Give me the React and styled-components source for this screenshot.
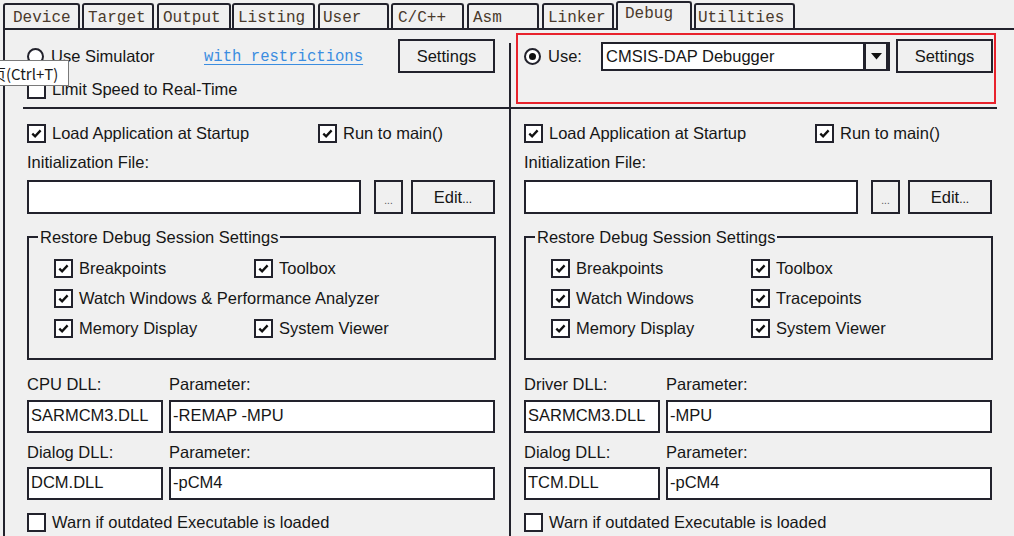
import React from "react";
import styled, { createGlobalStyle } from "styled-components";

const DARK = "#22222c";

const GlobalStyle = createGlobalStyle`
  html, body {
    margin: 0;
    padding: 0;
    background: #f0f0f0;
  }
  body {
    font-family: "Liberation Sans", Arial, sans-serif;
    font-size: 16.5px;
    color: #161616;
  }
`;

const Page = styled.div`
  position: relative;
  width: 1014px;
  height: 536px;
  overflow: hidden;
  background: #f0f0f0;
`;

const TabBar = styled.div`
  display: flex;
  align-items: flex-end;
  height: 28px;
`;

const Tab = styled.div`
  box-sizing: border-box;
  position: relative;
  z-index: ${(p) => (p.$active ? 2 : 0)};
  width: ${(p) => p.$w}px;
  margin-left: ${(p) => p.$ml}px;
  height: ${(p) => (p.$active ? 29 : 25)}px;
  margin-bottom: ${(p) => (p.$active ? -2 : 0)}px;
  padding: ${(p) => (p.$active ? 2 : 4)}px 0 0 ${(p) => p.$pad}px;
  border: 2px solid ${DARK};
  border-bottom: none;
  border-radius: 3px 3px 0 0;
  background: #f0f0f0;
  font-family: "Liberation Mono", "DejaVu Sans Mono", monospace;
  font-size: 16px;
  line-height: 18px;
  color: #4a3a2c;
  white-space: nowrap;
`;

const Panel = styled.div`
  margin-left: 3px;
  height: 506px;
  border-top: 2px solid ${DARK};
  border-left: 2px solid ${DARK};
  display: grid;
  grid-template-columns: 504px 2px 1fr;
`;

const VSep = styled.div`
  margin-top: 13px;
  background: ${DARK};
`;

const Column = styled.div`
  display: flex;
  flex-direction: column;
  padding-left: ${(p) => p.$pl}px;
  min-width: 0;
`;

const Top = styled.div`
  height: 77px;
`;

const HLine = styled.div`
  width: 486px;
  height: 2px;
  margin-left: ${(p) => p.$ml}px;
  background: ${DARK};
`;

const SimRow = styled.div`
  display: grid;
  grid-template-columns: 177px 1fr 97px;
  align-items: center;
  width: 468px;
  height: 34px;
  margin-top: 9px;
`;

const RedBox = styled.div`
  box-sizing: border-box;
  display: grid;
  grid-template-columns: 71px 289px 97px;
  column-gap: 6px;
  grid-template-rows: 34px;
  align-items: center;
  width: 480px;
  height: 71px;
  margin: 3px 0 0 -8px;
  padding: 4px 0 0 6px;
  border: 2px solid #e8222c;
`;

const Option = styled.label`
  display: flex;
  align-items: center;
  gap: 7px;
  line-height: 18px;
  white-space: nowrap;
`;

const RadioCircle = styled.span`
  box-sizing: border-box;
  display: flex;
  align-items: center;
  justify-content: center;
  width: 17px;
  height: 17px;
  border: 2px solid ${DARK};
  border-radius: 50%;
  background: #fff;
  flex: none;
`;

const RadioDot = styled.span`
  width: 7px;
  height: 7px;
  border-radius: 50%;
  background: #111;
`;

const Radio = ({ checked }) => (
  <RadioCircle>{checked && <RadioDot />}</RadioCircle>
);

const Link = styled.span`
  font-family: "Liberation Mono", "DejaVu Sans Mono", monospace;
  font-size: 15.6px;
  color: #3b8de0;
  text-decoration: underline;
  text-underline-offset: 3px;
  white-space: nowrap;
  margin-top: 1px;
`;

const Button = styled.div`
  box-sizing: border-box;
  display: flex;
  align-items: center;
  justify-content: center;
  width: ${(p) => p.$w}px;
  height: 34px;
  margin-left: ${(p) => p.$ml || 0}px;
  border: 2px solid ${DARK};
  background: #f0f0f0;
  white-space: nowrap;
`;

const SmallDots = styled.span`
  font-size: 10px;
  color: #555;
  margin-top: 6px;
`;

const EditDots = styled.span`
  font-size: 12px;
  margin-top: 4px;
`;

const Combo = styled.div`
  box-sizing: border-box;
  display: flex;
  height: 29px;
  border: 2px solid ${DARK};
  border-right-width: 4px;
  background: #fff;
`;

const ComboText = styled.div`
  flex: 1;
  padding-left: 3px;
  line-height: 25px;
  font-size: 16.5px;
`;

const ComboArrow = styled.div`
  display: flex;
  align-items: center;
  justify-content: center;
  width: 20px;
  border-left: 3px solid ${DARK};
  background: #f2f2f2;
`;

const CheckBoxEl = styled.span`
  box-sizing: border-box;
  display: flex;
  align-items: center;
  justify-content: center;
  width: 19px;
  height: 19px;
  border: 2px solid ${DARK};
  background: #fff;
  flex: none;
`;

const Check = ({ checked }) => (
  <CheckBoxEl>
    {checked && (
      <svg width="11" height="9" viewBox="0 0 11 9">
        <path d="M1.3 4.6 L4.1 7.3 L9.6 1.4" fill="none" stroke="#111" strokeWidth="2.3" />
      </svg>
    )}
  </CheckBoxEl>
);

const CheckItem = styled.div`
  display: flex;
  align-items: center;
  gap: 6px;
  height: 19px;
  width: ${(p) => (p.$w ? `${p.$w}px` : "auto")};
  margin-top: ${(p) => p.$mt || 0}px;
  white-space: nowrap;
  grid-column: ${(p) => (p.$span ? "span 2" : "auto")};
`;

const CheckRow = styled.div`
  display: flex;
  margin-top: ${(p) => p.$mt}px;
`;

const FieldLabel = styled.div`
  line-height: 18px;
  margin-top: ${(p) => p.$mt || 0}px;
  white-space: nowrap;
`;

const FileRow = styled.div`
  display: flex;
  margin-top: 9px;
`;

const TextBox = styled.div`
  box-sizing: border-box;
  width: ${(p) => (p.$w ? `${p.$w}px` : "auto")};
  height: ${(p) => p.$h || 33}px;
  padding: 0 0 3px 2px;
  border: 2px solid ${DARK};
  background: #fff;
  line-height: ${(p) => (p.$h || 33) - 7}px;
  white-space: nowrap;
`;

const Group = styled.fieldset`
  box-sizing: border-box;
  width: 469px;
  margin: 14px 0 0 0;
  padding: 13px 0 20px 0;
  border: 2px solid ${DARK};
  min-width: 0;
`;

const Legend = styled.legend`
  margin-left: 9px;
  padding: 0 2px;
  line-height: 18px;
  font-size: 16.5px;
`;

const GroupGrid = styled.div`
  display: grid;
  grid-template-columns: 200px auto;
  row-gap: 11px;
  margin-left: 25px;
`;

const DllRow = styled.div`
  display: grid;
  grid-template-columns: 136px 326px;
  column-gap: 6px;
  margin-top: ${(p) => p.$mt}px;
`;

const Tooltip = styled.div`
  position: absolute;
  left: -11px;
  top: 60px;
  z-index: 5;
  height: 24px;
  padding: 0 10px 0 1px;
  border: 1px solid #7a7a7a;
  background: #fff;
  font-family: "Noto Sans CJK SC", "Noto Sans", sans-serif;
  font-size: 15px;
  line-height: 25px;
  color: #1a1a1a;
  white-space: nowrap;
`;

const tabs = [
  { label: "Device", left: 3, right: 80, pad: 8 },
  { label: "Target", left: 82, right: 154, pad: 4 },
  { label: "Output", left: 157, right: 231, pad: 4 },
  { label: "Listing", left: 232, right: 315, pad: 4 },
  { label: "User", left: 318, right: 389, pad: 3 },
  { label: "C/C++", left: 391, right: 464, pad: 5 },
  { label: "Asm", left: 467, right: 539, pad: 4 },
  { label: "Linker", left: 542, right: 614, pad: 4 },
  { label: "Debug", left: 616, right: 692, pad: 7, active: true },
  { label: "Utilities", left: 694, right: 795, pad: 2 },
];

const DebugSettings = ({ restore, dllLabel, dll, dllParam, dialog, dialogParam }) => (
  <>
    <CheckRow $mt={15}>
      <CheckItem $w={291}>
        <Check checked />
        Load Application at Startup
      </CheckItem>
      <CheckItem>
        <Check checked />
        Run to main()
      </CheckItem>
    </CheckRow>
    <FieldLabel $mt={10}>Initialization File:</FieldLabel>
    <FileRow>
      <TextBox $w={334} $h={34} />
      <Button $w={29} $ml={13}>
        <SmallDots>...</SmallDots>
      </Button>
      <Button $w={84} $ml={8}>
        Edit<EditDots>...</EditDots>
      </Button>
    </FileRow>
    <Group>
      <Legend>Restore Debug Session Settings</Legend>
      <GroupGrid>
        {restore.map((item) => (
          <CheckItem key={item.label} $span={item.span}>
            <Check checked />
            {item.label}
          </CheckItem>
        ))}
      </GroupGrid>
    </Group>
    <DllRow $mt={15}>
      <FieldLabel>{dllLabel}</FieldLabel>
      <FieldLabel>Parameter:</FieldLabel>
    </DllRow>
    <DllRow $mt={7}>
      <TextBox>{dll}</TextBox>
      <TextBox>{dllParam}</TextBox>
    </DllRow>
    <DllRow $mt={10}>
      <FieldLabel>Dialog DLL:</FieldLabel>
      <FieldLabel>Parameter:</FieldLabel>
    </DllRow>
    <DllRow $mt={6}>
      <TextBox>{dialog}</TextBox>
      <TextBox>{dialogParam}</TextBox>
    </DllRow>
    <CheckItem $mt={13}>
      <Check />
      Warn if outdated Executable is loaded
    </CheckItem>
  </>
);

const leftRestore = [
  { label: "Breakpoints" },
  { label: "Toolbox" },
  { label: "Watch Windows & Performance Analyzer", span: true },
  { label: "Memory Display" },
  { label: "System Viewer" },
];

const rightRestore = [
  { label: "Breakpoints" },
  { label: "Toolbox" },
  { label: "Watch Windows" },
  { label: "Tracepoints" },
  { label: "Memory Display" },
  { label: "System Viewer" },
];

export default function App() {
  return (
    <Page>
      <GlobalStyle />
      <TabBar>
        {tabs.map((t, i) => (
          <Tab
            key={t.label}
            $w={t.right - t.left}
            $ml={t.left - (i ? tabs[i - 1].right : 0)}
            $pad={t.pad}
            $active={t.active}
          >
            {t.label}
          </Tab>
        ))}
      </TabBar>
      <Panel>
        <Column $pl={22}>
          <Top>
            <SimRow>
              <Option>
                <Radio />
                Use Simulator
              </Option>
              <Link>with restrictions</Link>
              <Button $w={97}>Settings</Button>
            </SimRow>
            <CheckItem $mt={7}>
              <Check />
              Limit Speed to Real-Time
            </CheckItem>
          </Top>
          <HLine $ml={-4} />
          <DebugSettings
            restore={leftRestore}
            dllLabel="CPU DLL:"
            dll="SARMCM3.DLL"
            dllParam="-REMAP -MPU"
            dialog="DCM.DLL"
            dialogParam="-pCM4"
          />
        </Column>
        <VSep />
        <Column $pl={13}>
          <Top>
            <RedBox>
              <Option>
                <Radio checked />
                Use:
              </Option>
              <Combo>
                <ComboText>CMSIS-DAP Debugger</ComboText>
                <ComboArrow>
                  <svg width="11" height="7" viewBox="0 0 11 7">
                    <polygon points="0,0 11,0 5.5,6.5" fill="#111" />
                  </svg>
                </ComboArrow>
              </Combo>
              <Button $w={97}>Settings</Button>
            </RedBox>
          </Top>
          <HLine $ml={-13} />
          <DebugSettings
            restore={rightRestore}
            dllLabel="Driver DLL:"
            dll="SARMCM3.DLL"
            dllParam="-MPU"
            dialog="TCM.DLL"
            dialogParam="-pCM4"
          />
        </Column>
      </Panel>
      <Tooltip>页(Ctrl+T)</Tooltip>
    </Page>
  );
}
